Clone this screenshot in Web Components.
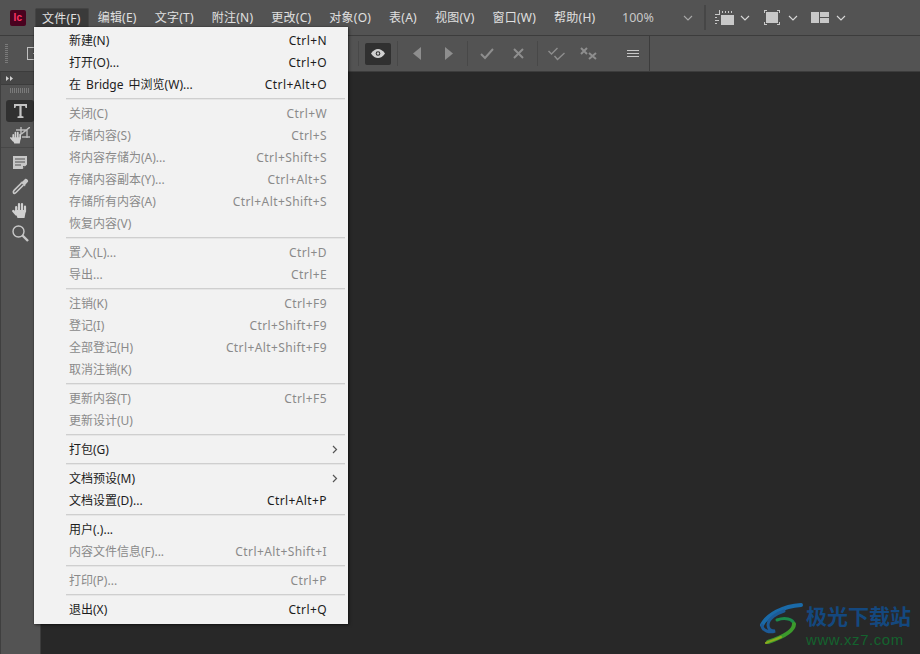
<!DOCTYPE html>
<html lang="zh">
<head>
<meta charset="utf-8">
<title>InCopy</title>
<style>
  html, body { margin: 0; height: 100%; background: #282828; overflow: hidden; }
  body { font-family: "Noto Sans", "Noto Sans CJK SC", sans-serif; }
</style>
</head>
<body>
<ic-app></ic-app>
<script>
(() => {
  const chev = `<svg width="10" height="6" viewBox="0 0 10 6" fill="none" stroke="currentColor" stroke-width="1.1"><path d="M1 1l4 4 4-4"/></svg>`;
  // 16x16 hand, fat fingers drawn as round strokes
  const hand = `<path fill="#d0d0d0" d="M2.500 8h11.500l-1.500 8H5.500z"/><g fill="none" stroke="#d0d0d0" stroke-width="2.200" stroke-linecap="round"><path d="M4.200 5v5M7 2v6M10 2v6M13 4.500v5M1.200 9l3 3.500"/></g>`;

  class IcMenubar extends HTMLElement {
    constructor() {
      super();
      const titles = ['文件(F)', '编辑(E)', '文字(T)', '附注(N)', '更改(C)', '对象(O)', '表(A)', '视图(V)', '窗口(W)', '帮助(H)'];
      const items = titles.map((t, i) => `<span class="m${i === 0 ? ' on' : ''}">${t}</span>`).join('');
      this.attachShadow({ mode: 'open' }).innerHTML = `
        <style>
          :host { display: flex; align-items: center; height: 35px; background: #535353; border-bottom: 1px solid #3c3c3c; color: #e0e0e0; font-size: 12px; letter-spacing: .24px; flex: none; }
          .logo { width: 16px; height: 16px; margin: 0 9px 0 10px; background: #49021f; border-radius: 2px; color: #ff3366; font: bold 10px/16px "Liberation Sans", sans-serif; text-align: center; flex: none; }
          .m { padding: 0 8px; height: 19px; line-height: 19px; white-space: nowrap; border: 1px solid transparent; border-bottom: 0; flex: none; margin-top: -1px; }
          .on { background: #3a3a3a; border-color: #444; border-radius: 2px 2px 0 0; height: 20px; margin-top: 1px; padding: 0 7px 0 6px; }
          .right { margin-left: auto; padding-right: 74px; display: flex; align-items: center; flex: none; letter-spacing: 0; }
          .zoom { width: 61px; color: #c8c8c8; font-size: 12.500px; flex: none; }
          .chev { display: flex; color: #a8a8a8; flex: none; }
          .wchev { color: #d8d8d8; display: flex; flex: none; }
          .div { width: 2px; height: 25px; background: #464646; margin: 0 9px 0 11px; flex: none; }
          svg { display: block; flex: none; }
        </style>
        <div class="logo">Ic</div>${items}
        <div class="right">
          <span class="zoom">100%</span>
          <span class="chev">${chev}</span>
          <span class="div"></span>
          <svg style="margin-right:6px" width="19" height="15" viewBox="0 0 19 15" fill="#c8c8c8"><rect x="6" y="5" width="13" height="10"/><path d="M0 4h4V0h1v5H0zM7 1h1v2H7zM10 1h1v2h-1zM13 1h1v2h-1zM16 1h1v2h-1zM0 7h2v1H0zM0 10h4v1H0zM0 13h2v1H0z"/></svg>
          <span class="wchev" style="margin-right:14px">${chev}</span>
          <svg style="margin-right:8px" width="16" height="15" viewBox="0 0 16 15" fill="#c8c8c8"><rect x="2" y="2" width="12" height="11"/><path d="M0 0h3v1H1v2H0zM13 0h3v3h-1V1h-2zM0 12h1v2h2v1H0zM15 12h1v3h-3v-1h2z"/></svg>
          <span class="wchev" style="margin-right:13px">${chev}</span>
          <svg style="margin-right:7px" width="18" height="11" viewBox="0 0 18 11" fill="#c8c8c8"><rect width="8" height="11"/><rect x="9" width="9" height="5"/><rect x="9" y="6" width="9" height="5"/></svg>
          <span class="wchev">${chev}</span>
        </div>`;
    }
  }

  class IcToolbar extends HTMLElement {
    constructor() {
      super();
      this.attachShadow({ mode: 'open' }).innerHTML = `
        <style>
          :host { display: flex; align-items: center; height: 35px; background: #535353; border-bottom: 1px solid #3c3c3c; flex: none; }
          .grip { width: 3px; height: 19px; margin-left: 5px; background: repeating-linear-gradient(#7a7a7a 0 1px, transparent 1px 2px); flex: none; }
          .frame { width: 11px; height: 11px; margin-left: 19px; border: 1px solid #c0c0c0; flex: none; background: linear-gradient(#c0c0c0, #c0c0c0) 5px 5px / 6px 1px no-repeat; }
          .right { margin-left: 318px; display: flex; align-items: center; height: 100%; flex: none; }
          .sep { width: 1px; height: 25px; background: #484848; flex: none; }
          .eye { display: flex; align-items: center; justify-content: center; width: 26px; height: 22px; background: #303030; border-radius: 2px; margin: 0 6px; flex: none; }
          svg { display: block; flex: none; }
          .end { width: 1px; height: 100%; background: #3c3c3c; flex: none; margin-left: 10px; }
        </style>
        <span class="grip"></span><span class="frame"></span>
        <div class="right">
          <span class="sep"></span>
          <span class="eye"><svg width="14" height="9" viewBox="0 0 14 9"><path fill="#d0d0d0" d="M0 4.500C2 1.500 4.500 0 7 0s5 1.500 7 4.500C12 7.500 9.500 9 7 9S2 7.500 0 4.500z"/><circle cx="7" cy="4.500" r="2.300" fill="#303030"/><circle cx="7" cy="4.500" r="1.200" fill="#d0d0d0"/></svg></span>
          <span class="sep"></span>
          <svg style="margin-left:15px" width="8" height="13" viewBox="0 0 8 13"><path fill="#8e8e8e" d="M8 0v13L0 6.500z"/></svg>
          <svg style="margin-left:24px" width="8" height="13" viewBox="0 0 8 13"><path fill="#8e8e8e" d="M0 0v13l8-6.500z"/></svg>
          <span class="sep" style="margin-left:14px"></span>
          <svg style="margin-left:12px" width="14" height="12" viewBox="0 0 14 12" fill="none" stroke="#8e8e8e" stroke-width="2"><path d="M1 6l4 4 8-9"/></svg>
          <svg style="margin-left:19px" width="11" height="11" viewBox="0 0 11 11" fill="none" stroke="#8e8e8e" stroke-width="2"><path d="M1 1l9 9M10 1l-9 9"/></svg>
          <span class="sep" style="margin-left:13px"></span>
          <svg style="margin-left:10px" width="17" height="14" viewBox="0 0 17 14" fill="none" stroke="#8e8e8e" stroke-width="1.400"><path d="M0.500 4l3 3 6-6M6.500 9l3 3.500 7-6.500"/></svg>
          <svg style="margin-left:15px" width="17" height="13" viewBox="0 0 17 13" fill="none" stroke="#8e8e8e" stroke-width="2"><path d="M1 1l6 6M7 1L1 7M9 6l7 6M16 6l-7 6"/></svg>
          <svg style="margin-left:30px" width="12" height="8" viewBox="0 0 12 8" fill="#c8c8c8"><path d="M0 0h12v1H0zM0 3h12v1H0zM0 6h12v1H0z"/></svg>
          <span class="end"></span>
        </div>`;
    }
  }

  class IcToolPanel extends HTMLElement {
    constructor() {
      super();
      this.attachShadow({ mode: 'open' }).innerHTML = `
        <style>
          :host { display: flex; flex-direction: column; width: 41px; background: #535353; border-right: 1px solid #3c3c3c; flex: none; border-left: 1px solid #3f3f3f; box-sizing: border-box; }
          .head { height: 13px; background: #464646; border-bottom: 1px solid #3c3c3c; box-sizing: border-box; display: flex; align-items: center; padding-left: 5px; flex: none; }
          .grip { height: 5px; margin: 3px 0 0 9px; width: 20px; background: repeating-linear-gradient(90deg, #7a7a7a 0 1px, transparent 1px 2px); flex: none; }
          .tools { margin-top: 7px; display: flex; flex-direction: column; align-items: flex-start; padding-left: 5px; }
          .t { width: 28px; height: 24px; display: flex; align-items: center; justify-content: center; flex: none; }
          .on { background: #303030; border-radius: 3px; height: 22px; margin-bottom: 1px; }
          .rule { height: 1px; width: 33px; background: #474747; margin: 0 0 2px -5px; flex: none; }
          svg { display: block; }
        </style>
        <div class="head"><svg width="7" height="5" viewBox="0 0 7 5" fill="#d0d0d0"><path d="M0 0l3 2.500L0 5zM4 0l3 2.500L4 5z"/></svg></div>
        <div class="grip"></div>
        <div class="tools">
          <span class="t on"><svg width="13" height="14" viewBox="0 0 13 14" fill="#c4c4c4"><path d="M0 0h13v4h-1.400L11 2H7.600v10l1.900 .6V14h-6v-1.400l1.900-.6V2H2l-.6 2H0z"/></svg></span>
          <span class="t"><svg width="20" height="17" viewBox="0 0 20 17"><path fill="none" stroke="#bcbcbc" stroke-width="1.400" d="M6 3h11v8M11 0v10h9M20 0L9 9"/><g transform="translate(0 4) scale(.78)"><path fill="#535353" stroke="#535353" stroke-width="2.500" d="M2 6h12v10H2z"/>${hand}</g></svg></span>
          <span class="rule"></span>
          <span class="t"><svg width="14" height="13" viewBox="0 0 14 13" fill="#c8c8c8"><path fill-rule="evenodd" d="M0 0h14v8.500L9.500 13H0zM2 2.500v1h10v-1zM2 5.500v1h10v-1zM2 8.500v1h6v-1z"/><path d="M10 12l3-1.500-3-.5z" fill="#535353"/></svg></span>
          <span class="t"><svg width="17" height="17" viewBox="0 0 17 17"><path fill="none" stroke="#c8c8c8" stroke-width="1.700" d="M9.500 5L2.300 12.200c-1.200 1.200-1.200 1.500-.8 2.500s1.500 .8 2.500-.2L11.500 7"/><path fill="#c8c8c8" d="M8.500 4l2-.5L13 1c1.200-1.200 3.800 1.200 3 2.700L13.500 6.500 13 8.500z"/></svg></span>
          <span class="t"><svg width="16" height="16" viewBox="0 0 16 16">${hand}</svg></span>
          <span class="t" style="margin-top:-1px"><svg width="17" height="17" viewBox="0 0 17 17" fill="none" stroke="#c8c8c8"><circle cx="6.500" cy="6.500" r="5.500" stroke-width="1.400"/><path stroke-width="2.400" d="M10.500 10.500l5.500 5.500"/></svg></span>
        </div>`;
    }
  }

  // disabled rows carry the "off" attribute
  class IcMenuItem extends HTMLElement {
    constructor() {
      super();
      this.attachShadow({ mode: 'open' }).innerHTML = `
        <style>
          :host { display: flex; align-items: center; justify-content: space-between; height: 22px; line-height: 20px; padding: 0 21px 0 35px; color: #1c1c1c; font-size: 12px; white-space: nowrap; word-spacing: 2px; }
          :host([off]) { color: #8a8a8a; }
          span { display: block; height: 20px; margin-top: 2px; }
          .key { letter-spacing: .4px; }
          .arrow { display: none; margin-right: -11px; }
          :host([sub]) .arrow { display: block; }
        </style>
        <span><slot></slot></span>
        <span class="key"></span>
        <svg class="arrow" width="6" height="9" viewBox="0 0 6 9" fill="none" stroke="#555" stroke-width="1.200"><path d="M1 1l3.500 3.500L1 8"/></svg>`;
    }
    connectedCallback() {
      this.shadowRoot.querySelector('.key').textContent = this.getAttribute('key') || '';
    }
  }

  class IcMenuSep extends HTMLElement {
    constructor() {
      super();
      this.attachShadow({ mode: 'open' }).innerHTML = `
        <style>
          :host { display: flex; align-items: center; height: 7px; padding-left: 32px; padding-right: 3px; }
          i { display: block; flex: 1; height: 1px; background: #cfcfcf; box-shadow: 0 1px #e6e6e6; }
        </style><i></i>`;
    }
  }

  class IcMenu extends HTMLElement {
    constructor() {
      super();
      this.attachShadow({ mode: 'open' }).innerHTML = `
        <style>
          :host { position: absolute; left: 34px; top: 27px; width: 314px; height: 597px; box-sizing: border-box; padding: 2px 0 0; background: #f2f2f2; box-shadow: 1px 1px 3px rgba(0,0,0,.5), 0 0 1px rgba(0,0,0,.5); display: block; }
        </style><slot></slot>`;
    }
  }

  class IcWatermark extends HTMLElement {
    constructor() {
      super();
      this.attachShadow({ mode: 'open' }).innerHTML = `
        <style>
          :host { position: absolute; right: 9px; bottom: 7px; width: 150px; height: 46px; display: flex; align-items: center; }
          .txt { margin-left: 3px; }
          .cn { color: #14487f; font: bold 21px/31px "Noto Sans CJK SC", sans-serif; white-space: nowrap; }
          .en { color: #14622e; font: 15px/17px "Liberation Sans", sans-serif; letter-spacing: .55px; white-space: nowrap; }
          svg { flex: none; margin-left: -2px; }
        </style>
        <svg width="44" height="42" viewBox="0 0 44 42" fill="none" stroke-linecap="round">
          <path stroke="#1a6aa8" stroke-width="4" d="M42 2C24 3 8 12 3 22"/>
          <path stroke="#1d5a96" stroke-width="3" d="M3 22c0 6 8 8 13 6-4 0-7-2-7-6 0-7 10-12 16-14"/>
          <path stroke="#1c8a4a" stroke-width="3" d="M18 17c8-3 16-1 17 4"/>
          <path stroke="#3c9a2c" stroke-width="4" d="M35 21c0 8-14 14-26 18"/>
          <path stroke="#8caa1e" stroke-width="2" d="M22 34C16 37 11 38 7 40"/>
        </svg>
        <div class="txt"><div class="cn">极光下载站</div><div class="en">www.xz7.com</div></div>`;
    }
  }

  class IcApp extends HTMLElement {
    constructor() {
      super();
      const rows = [
        [['新建(N)', 'Ctrl+N'], ['打开(O)...', 'Ctrl+O'], ['在 Bridge 中浏览(W)...', 'Ctrl+Alt+O']],
        [['关闭(C)', 'Ctrl+W', 1], ['存储内容(S)', 'Ctrl+S', 1], ['将内容存储为(A)...', 'Ctrl+Shift+S', 1], ['存储内容副本(Y)...', 'Ctrl+Alt+S', 1], ['存储所有内容(A)', 'Ctrl+Alt+Shift+S', 1], ['恢复内容(V)', '', 1]],
        [['置入(L)...', 'Ctrl+D', 1], ['导出...', 'Ctrl+E', 1]],
        [['注销(K)', 'Ctrl+F9', 1], ['登记(I)', 'Ctrl+Shift+F9', 1], ['全部登记(H)', 'Ctrl+Alt+Shift+F9', 1], ['取消注销(K)', '', 1]],
        [['更新内容(T)', 'Ctrl+F5', 1], ['更新设计(U)', '', 1]],
        [['打包(G)', '', 0, 1]],
        [['文档预设(M)', '', 0, 1], ['文档设置(D)...', 'Ctrl+Alt+P']],
        [['用户(.)...', ''], ['内容文件信息(F)...', 'Ctrl+Alt+Shift+I', 1]],
        [['打印(P)...', 'Ctrl+P', 1]],
        [['退出(X)', 'Ctrl+Q']],
      ];
      const menu = rows.map(group => group.map(([t, k, off, sub]) =>
        `<ic-menu-item key="${k}"${off ? ' off' : ''}${sub ? ' sub' : ''}>${t}</ic-menu-item>`).join('')
      ).join('<ic-menu-sep></ic-menu-sep>');
      this.attachShadow({ mode: 'open' }).innerHTML = `
        <style>
          :host { display: flex; flex-direction: column; position: relative; width: 920px; height: 654px; overflow: hidden; background: #282828; font-family: "Noto Sans", "Noto Sans CJK SC", sans-serif; }
          .body { flex: 1; display: flex; min-height: 0; }
          .doc { flex: 1; background: #282828; }
        </style>
        <ic-menubar></ic-menubar>
        <ic-toolbar></ic-toolbar>
        <div class="body"><ic-tool-panel></ic-tool-panel><div class="doc"></div></div>
        <ic-menu>${menu}</ic-menu>
        <ic-watermark></ic-watermark>`;
    }
  }

  customElements.define('ic-menubar', IcMenubar);
  customElements.define('ic-toolbar', IcToolbar);
  customElements.define('ic-tool-panel', IcToolPanel);
  customElements.define('ic-menu-item', IcMenuItem);
  customElements.define('ic-menu-sep', IcMenuSep);
  customElements.define('ic-menu', IcMenu);
  customElements.define('ic-watermark', IcWatermark);
  customElements.define('ic-app', IcApp);
})();
</script>
</body>
</html>
